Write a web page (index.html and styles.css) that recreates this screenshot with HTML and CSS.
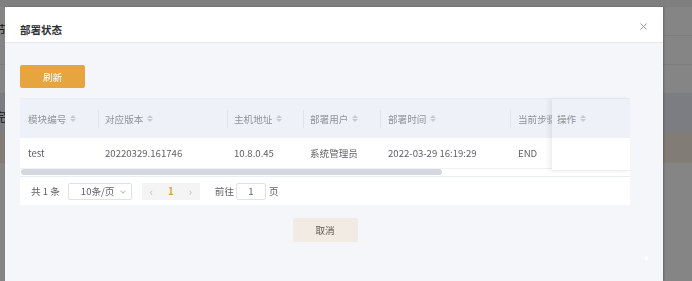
FILE: index.html
```html
<!DOCTYPE html>
<html lang="zh-CN">
<head>
  <meta charset="UTF-8">
  <title>部署状态</title>
  <link rel="stylesheet" href="styles.css">
</head>
<body>
  <div class="page">
    <div class="page-top"></div>
    <div class="page-row"><span class="page-text">节点</span></div>
    <div class="page-row"></div>
    <div class="page-row"></div>
    <div class="page-head"><span class="page-text">完成</span></div>
    <div class="page-warn"></div>
  </div>
  <div class="mask"></div>
  <div class="dialog">
    <div class="dialog-header">
      <span class="dialog-title">部署状态</span>
      <span class="dialog-close">
        <svg width="7" height="7" viewBox="0 0 7 7"><path d="M0.5 0.5 L6.5 6.5 M6.5 0.5 L0.5 6.5" stroke="#8e95b8" stroke-width="1" fill="none"/></svg>
      </span>
    </div>
    <div class="dialog-body">
      <button class="btn-refresh">刷新</button>
      <div class="table">
        <div class="table-scroll">
          <div class="table-row table-head">
            <div class="cell c1">模块编号<i class="sort"></i></div>
            <div class="cell c2">对应版本<i class="sort"></i></div>
            <div class="cell c3">主机地址<i class="sort"></i></div>
            <div class="cell c4">部署用户<i class="sort"></i></div>
            <div class="cell c5">部署时间<i class="sort"></i></div>
            <div class="cell c6">当前步骤<i class="sort"></i></div>
          </div>
          <div class="table-row table-data">
            <div class="cell c1">test</div>
            <div class="cell c2">20220329.161746</div>
            <div class="cell c3">10.8.0.45</div>
            <div class="cell c4">系统管理员</div>
            <div class="cell c5">2022-03-29 16:19:29</div>
            <div class="cell c6">END</div>
          </div>
          <div class="scrollbar"><div class="thumb"></div></div>
        </div>
        <div class="fixed-col">
          <div class="fixed-head">操作<i class="sort"></i></div>
          <div class="fixed-cell"></div>
        </div>
        <div class="pager">
          <span class="total">共 1 条</span>
          <span class="sizes">10条/页<i class="chev"></i></span>
          <span class="pages">
            <span class="pbtn">&lsaquo;</span>
            <span class="pbtn active">1</span>
            <span class="pbtn">&rsaquo;</span>
          </span>
          <span class="jump">前往<span class="jump-input">1</span>页</span>
        </div>
      </div>
      <div class="dialog-footer">
        <button class="btn-cancel">取消</button>
      </div>
    </div>
    <span class="dot"></span>
  </div>
</body>
</html>
```

FILE: styles.css
```css
body {
  margin: 0;
  font-family: "Noto Sans CJK SC", "Noto Sans", sans-serif;
  background: #fff;
  overflow: hidden;
}
.page {
  height: 281px;
}
.page-top {
  height: 7px;
  background: #f4f4f4;
}
.page-row {
  height: 28px;
  border-bottom: 1px solid #eeeeee;
  background: #ffffff;
}
.page-text {
  display: inline-block;
  margin-left: -6px;
  margin-top: 14px;
  font-size: 12px;
  color: #333;
}
.page-head {
  height: 38px;
  background: #edf0fa;
}
.page-warn {
  height: 31px;
  background: #faeee3;
}
.mask {
  position: fixed;
  inset: 0;
  background: rgba(0, 0, 0, 0.48);
}
.dialog {
  position: fixed;
  left: 5px;
  top: 7px;
  width: 658px;
  bottom: 0;
  background: #f5f6fa;
  box-shadow: 1px 0 2px rgba(0, 0, 0, 0.25);
}
.dialog-header {
  height: 36px;
  box-sizing: border-box;
  background: #fff;
  border-bottom: 1px solid #e7e9ee;
  display: flex;
  justify-content: space-between;
  padding: 16px 16px 0 15px;
}
.dialog-title {
  font-size: 10.5px;
  line-height: 14px;
  font-weight: bold;
  color: #303133;
}
.dialog-close {
  height: 7px;
  line-height: 0;
}
.dialog-body {
  padding: 22px 33px 0 15px;
}
.btn-refresh {
  display: block;
  width: 65px;
  height: 23px;
  border: none;
  border-radius: 2px;
  background: #e6a53f;
  color: #fff;
  font-family: inherit;
  font-size: 9.6px;
  padding: 0;
  margin-bottom: 10px;
}
.table {
  position: relative;
  width: 610px;
  background: #fff;
  border-top: 1px solid #e9ecf3;
}
.table-scroll {
  overflow: hidden;
}
.table-row {
  display: flex;
  width: 890px;
}
.table-head {
  height: 39px;
  background: #eef1f8;
  color: #909399;
}
.table-data {
  height: 30px;
  background: #fff;
  color: #606266;
  border-bottom: 1px solid #f0f1f4;
}
.cell {
  display: flex;
  align-items: center;
  box-sizing: border-box;
  padding-left: 7px;
  font-size: 9.6px;
  white-space: nowrap;
  position: relative;
}
.table-head .cell + .cell::before {
  content: "";
  position: absolute;
  left: 0;
  top: 11px;
  height: 18px;
  border-left: 1px solid #dfe3ec;
}
.c1 { width: 78px; padding-left: 8px; }
.c2 { width: 129px; }
.c3 { width: 76px; }
.c4 { width: 77px; }
.c5 { width: 130px; padding-left: 8px; }
.c6 { width: 400px; padding-left: 8px; }
.sort {
  display: inline-flex;
  flex-direction: column;
  gap: 1px;
  margin-left: 4px;
}
.sort::before,
.sort::after {
  content: "";
  width: 0;
  height: 0;
  border-left: 3px solid transparent;
  border-right: 3px solid transparent;
}
.sort::before {
  border-bottom: 3px solid #c6cad2;
}
.sort::after {
  border-top: 3px solid #c6cad2;
}
.scrollbar {
  height: 7px;
  border-bottom: 1px solid #ebeef5;
}
.thumb {
  width: 421px;
  height: 6px;
  margin-left: 1px;
  border-radius: 3px;
  background: #d5d8df;
}
.fixed-col {
  position: absolute;
  top: 0;
  right: 0;
  width: 78px;
  height: 71px;
  background: #fff;
  box-shadow: -3px 0 5px rgba(0, 0, 0, 0.07);
  border-bottom: 1px solid #ebeef5;
}
.fixed-head {
  height: 39px;
  background: #eef1f8;
  color: #909399;
  font-size: 9.6px;
  display: flex;
  align-items: center;
  padding-left: 5px;
}
.pager {
  display: flex;
  align-items: center;
  height: 28px;
  padding-left: 11px;
  font-size: 9.6px;
  color: #606266;
}
.total {
  margin-right: 8px;
}
.sizes {
  display: flex;
  align-items: center;
  box-sizing: border-box;
  width: 64px;
  height: 17px;
  padding-left: 12px;
  border: 1px solid #dfe2e8;
  border-radius: 2px;
  position: relative;
  margin-right: 10px;
}
.chev {
  position: absolute;
  right: 6px;
  top: 5px;
  width: 3px;
  height: 3px;
  border-right: 1px solid #c0c4cc;
  border-bottom: 1px solid #c0c4cc;
  transform: rotate(45deg);
}
.pages {
  display: flex;
  height: 17px;
  background: #f4f4f5;
  margin-right: 15px;
}
.pbtn {
  width: 19px;
  display: flex;
  align-items: center;
  justify-content: center;
  color: #b9bcc2;
  font-size: 11px;
}
.pbtn.active {
  width: 20px;
  color: #e6a23c;
  font-weight: bold;
  font-size: 9.6px;
}
.jump {
  display: flex;
  align-items: center;
}
.jump-input {
  display: flex;
  align-items: center;
  justify-content: center;
  box-sizing: border-box;
  width: 30px;
  height: 17px;
  margin: 0 3px 0 2px;
  border: 1px solid #dfe2e8;
  border-radius: 2px;
  background: #fff;
}
.dialog-footer {
  width: 610px;
  display: flex;
  justify-content: center;
  padding-top: 13px;
}
.btn-cancel {
  width: 65px;
  height: 24px;
  border: none;
  border-radius: 2px;
  background: #f1ebe3;
  color: #5e5650;
  font-family: inherit;
  font-size: 9.6px;
  padding: 0;
}
.dot {
  position: absolute;
  left: 640px;
  top: 250px;
  width: 3px;
  height: 3px;
  background: #fff;
}
```
